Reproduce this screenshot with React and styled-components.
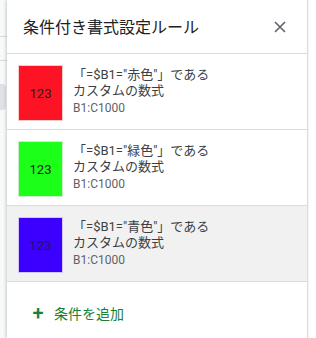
import React from "react";
import styled, { createGlobalStyle } from "styled-components";

const Global = createGlobalStyle`
  html, body {
    margin: 0;
    padding: 0;
    background: #fff;
    font-family: Roboto, "Noto Sans CJK JP", sans-serif;
  }
`;

const Page = styled.div`
  display: flex;
  flex-direction: row;
  width: 316px;
  height: 338px;
  overflow: hidden;
  background: #fff;
`;

const Sheet = styled.div`
  width: 7px;
  flex-shrink: 0;
  background: #f8f9fa;
  display: flex;
  flex-direction: column;
`;

const SheetLine = styled.div`
  height: ${(p) => p.h}px;
  border-bottom: 1px solid #dadce0;
`;

const SheetChip = styled.div`
  margin-top: 23px;
  height: 26px;
  width: 6px;
  background: #dfe1e5;
  border-radius: 0 4px 4px 0;
`;

const Panel = styled.div`
  width: 300px;
  flex-shrink: 0;
  background: #fff;
  border-right: 1px solid #dadce0;
  box-shadow: -1px 0 3px rgba(60, 64, 67, 0.25);
  display: flex;
  flex-direction: column;
`;

const Header = styled.div`
  height: 53px;
  display: flex;
  align-items: center;
  justify-content: space-between;
  padding: 0 20px 0 16px;
  border-bottom: 1px solid #dadce0;
`;

const Title = styled.div`
  font-size: 16px;
  color: #202124;
  margin-top: -2px;
`;

const Close = styled.div`
  width: 14px;
  height: 14px;
  display: flex;
  align-items: center;
  justify-content: center;
`;

const Rule = styled.div`
  height: 76px;
  display: flex;
  align-items: flex-start;
  padding: 11px 0 0 11px;
  box-sizing: border-box;
  border-bottom: 1px solid #dadce0;
  background: ${(p) => (p.active ? "#f1f1f1" : "#fff")};
`;

const Swatch = styled.div`
  width: 43px;
  height: 54px;
  flex-shrink: 0;
  background: ${(p) => p.color};
  border: 1px solid ${(p) => p.edge};
  display: flex;
  align-items: center;
  justify-content: center;
  font-size: 13px;
  color: #202124;
`;

const Info = styled.div`
  margin-left: 10px;
  display: flex;
  flex-direction: column;
  padding-top: 2px;
`;

const Line = styled.div`
  font-size: 13px;
  line-height: 16px;
  color: #3c4043;
`;

const Range = styled.div`
  font-size: 12px;
  line-height: 16px;
  margin-top: 1px;
  color: #5f6368;
`;

const AddRow = styled.div`
  display: flex;
  align-items: center;
  padding: 21px 0 0 24px;
  color: #188038;
  font-size: 14px;
`;

const Plus = styled.span`
  font-size: 20px;
  font-weight: 500;
  width: 14px;
  margin-right: 9px;
  text-align: center;
  line-height: 20px;
`;

const rules = [
  { name: "赤色", color: "#fc1424", edge: "#f6c9cc" },
  { name: "緑色", color: "#1bff19", edge: "#c9f0c9" },
  { name: "青色", color: "#3b00ff", edge: "#d0c8f0", active: true },
];

export default function App() {
  return (
    <Page>
      <Global />
      <Sheet>
        <SheetLine h={36} />
        <SheetLine h={23} />
        <SheetChip />
      </Sheet>
      <Panel>
        <Header>
          <Title>条件付き書式設定ルール</Title>
          <Close>
            <svg width="12" height="12" viewBox="0 0 12 12">
              <path d="M1 1L11 11M11 1L1 11" stroke="#5f6368" strokeWidth="1.6" />
            </svg>
          </Close>
        </Header>
        {rules.map((r) => (
          <Rule key={r.name} active={r.active}>
            <Swatch color={r.color} edge={r.edge}>123</Swatch>
            <Info>
              <Line>「=$B1="{r.name}"」である</Line>
              <Line>カスタムの数式</Line>
              <Range>B1:C1000</Range>
            </Info>
          </Rule>
        ))}
        <AddRow>
          <Plus>+</Plus>
          条件を追加
        </AddRow>
      </Panel>
    </Page>
  );
}
